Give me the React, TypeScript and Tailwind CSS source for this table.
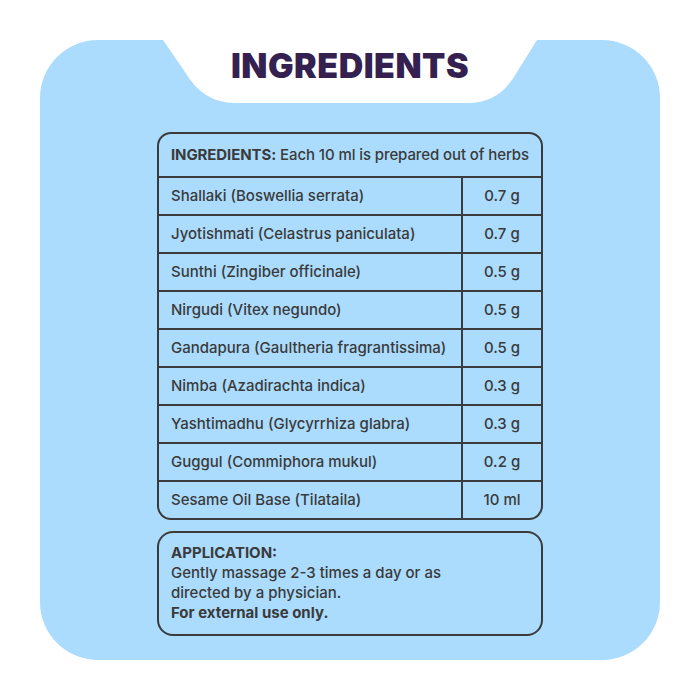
import React from "react";

const rows: [string, string][] = [
  ["Shallaki (Boswellia serrata)", "0.7 g"],
  ["Jyotishmati (Celastrus paniculata)", "0.7 g"],
  ["Sunthi (Zingiber officinale)", "0.5 g"],
  ["Nirgudi (Vitex negundo)", "0.5 g"],
  ["Gandapura (Gaultheria fragrantissima)", "0.5 g"],
  ["Nimba (Azadirachta indica)", "0.3 g"],
  ["Yashtimadhu (Glycyrrhiza glabra)", "0.3 g"],
  ["Guggul (Commiphora mukul)", "0.2 g"],
  ["Sesame Oil Base (Tilataila)", "10 ml"],
];

export default function App() {
  return (
    <div
      className="w-[700px] h-[700px] bg-white p-[40px]"
      style={{ fontFamily: "Inter, 'Open Sans', sans-serif" }}
    >
      <div className="relative w-[620px] h-[620px] rounded-[58px] bg-[#abdcfd]">
        <svg
          className="absolute left-0 top-0"
          width="620"
          height="70"
          viewBox="0 0 620 70"
        >
          <path
            d="M123,0 L145,32 Q163,63 195,63 L428,63 Q460,63 477,32 L497,0 Z"
            fill="#ffffff"
          />
        </svg>
        <div className="relative flex flex-col items-center">
          <h1 className="h-[50px] flex items-center text-[34px] font-black tracking-[0.5px] text-[#35214f]">
            INGREDIENTS
          </h1>
          <div className="mt-[42px] w-[386px] border-2 border-[#3b3b3b] rounded-[14px] text-[15px] font-medium text-[#3a3a3a]">
            <div className="h-[42px] flex items-center px-[12px] whitespace-nowrap tracking-[-0.1px]">
              <span className="font-bold">INGREDIENTS:</span>
              <span className="ml-[4px]">Each 10 ml is prepared out of herbs</span>
            </div>
            {rows.map(([name, qty]) => (
              <div key={name} className="h-[38px] border-t-2 border-[#3b3b3b] flex">
                <div className="flex-1 flex items-center px-[12px]">{name}</div>
                <div className="w-[80px] border-l-2 border-[#3b3b3b] flex items-center justify-center">
                  {qty}
                </div>
              </div>
            ))}
          </div>
          <div className="mt-[11px] w-[386px] border-2 border-[#3b3b3b] rounded-[16px] pt-[10px] pb-[11px] px-[12px] text-[15px] font-medium leading-[20px] text-[#3a3a3a]">
            <div className="font-bold">APPLICATION:</div>
            <div>Gently massage 2-3 times a day or as</div>
            <div>directed by a physician.</div>
            <div className="font-bold">For external use only.</div>
          </div>
        </div>
      </div>
    </div>
  );
}
